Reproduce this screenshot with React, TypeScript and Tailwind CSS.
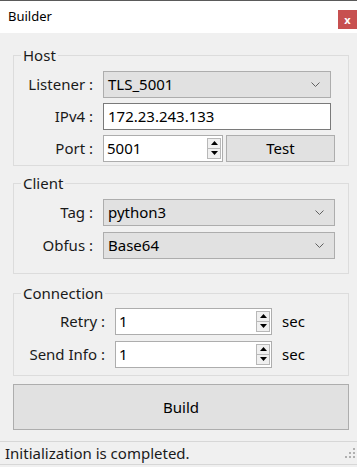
import React from 'react';

const font = { fontFamily: '"Noto Sans", "Open Sans", sans-serif' };

function Chevron() {
  return (
    <svg width="9" height="5" viewBox="0 0 9 5" className="shrink-0">
      <path d="M0.5 0.5 L4.5 4.5 L8.5 0.5" fill="none" stroke="#606060" strokeWidth="1" />
    </svg>
  );
}

function Combo({ value, width }: { value: string; width: string }) {
  return (
    <div
      className={`flex h-[27px] items-center justify-between border border-[#adadad] bg-[#e1e1e1] pl-[4px] pr-[10px] text-[15px] text-black ${width}`}
    >
      <span>{value}</span>
      <Chevron />
    </div>
  );
}

function SpinButtons() {
  return (
    <div className="flex h-full flex-col justify-center py-[2px] pr-[1px]">
      <div className="flex h-[11px] w-[14px] items-center justify-center border border-[#b8b8b8] bg-[#f0f0f0]">
        <svg width="7" height="4" viewBox="0 0 7 4">
          <path d="M3.5 0 L7 4 L0 4 Z" fill="#000" />
        </svg>
      </div>
      <div className="flex h-[11px] w-[14px] items-center justify-center border border-t-0 border-[#b8b8b8] bg-[#f0f0f0]">
        <svg width="7" height="4" viewBox="0 0 7 4">
          <path d="M0 0 L7 0 L3.5 4 Z" fill="#000" />
        </svg>
      </div>
    </div>
  );
}

function Spin({ value, width }: { value: string; width: string }) {
  return (
    <div className={`flex h-[27px] items-center justify-between border border-[#adadad] bg-white pl-[3px] text-[15px] ${width}`}>
      <span>{value}</span>
      <SpinButtons />
    </div>
  );
}

function Row({ label, labelWidth, children }: { label: string; labelWidth: string; children: React.ReactNode }) {
  return (
    <div className="flex h-[27px] items-center">
      <div className={`text-right text-[15px] text-[#1a1a1a] ${labelWidth}`}>{label}</div>
      <div className="ml-[10px] flex items-center">{children}</div>
    </div>
  );
}

function Group({ title, className, children }: { title: string; className: string; children: React.ReactNode }) {
  return (
    <fieldset className={`ml-[13px] w-[336px] border border-[#dcdcdc] ${className}`}>
      <legend className="ml-[7px] px-[2px] text-[15px] leading-[18px] text-[#1a1a1a]">{title}</legend>
      {children}
    </fieldset>
  );
}

export default function App() {
  return (
    <div className="flex h-[467px] w-[357px] flex-col overflow-hidden bg-[#f0f0f0]" style={font}>
      <div className="flex h-[33px] shrink-0 items-start justify-between border-t border-[#5a5a5a] bg-white">
        <span className="pl-[8px] pt-[6px] text-[13px] text-black">Builder</span>
        <div className="mt-[9px] flex h-[19px] w-[19px] items-center justify-center bg-[#c75050] text-[11px] font-bold leading-none text-white">
          x
        </div>
      </div>

      <Group title="Host" className="mt-[13px] pb-[3px]">
        <div className="flex flex-col gap-[5px] pt-[7px]">
          <Row label="Listener :" labelWidth="w-[79px]">
            <Combo value="TLS_5001" width="w-[228px]" />
          </Row>
          <Row label="IPv4 :" labelWidth="w-[79px]">
            <div className="flex h-[27px] w-[228px] items-center border border-[#7a7a7a] bg-white pl-[4px] text-[15px]">
              172.23.243.133
            </div>
          </Row>
          <Row label="Port :" labelWidth="w-[79px]">
            <Spin value="5001" width="w-[120px]" />
            <div className="ml-[3px] flex h-[27px] w-[109px] items-center justify-center border border-[#adadad] bg-[#e1e1e1] text-[15px]">
              Test
            </div>
          </Row>
        </div>
      </Group>

      <Group title="Client" className="mt-[8px] pb-[14px]">
        <div className="flex flex-col gap-[6px] pt-[7px]">
          <Row label="Tag :" labelWidth="w-[79px]">
            <Combo value="python3" width="w-[232px]" />
          </Row>
          <Row label="Obfus :" labelWidth="w-[79px]">
            <Combo value="Base64" width="w-[232px]" />
          </Row>
        </div>
      </Group>

      <Group title="Connection" className="mt-[10px] pb-[7px]">
        <div className="flex flex-col gap-[6px] pt-[6px]">
          <Row label="Retry :" labelWidth="w-[91px]">
            <Spin value="1" width="w-[157px]" />
            <span className="ml-[10px] text-[15px]">sec</span>
          </Row>
          <Row label="Send Info :" labelWidth="w-[91px]">
            <Spin value="1" width="w-[157px]" />
            <span className="ml-[10px] text-[15px]">sec</span>
          </Row>
        </div>
      </Group>

      <div className="ml-[13px] mt-[8px] flex h-[46px] w-[336px] items-center justify-center border border-[#adadad] bg-[#e1e1e1] text-[15px]">
        Build
      </div>

      <div className="mt-[11px] flex h-[24px] items-center justify-between border-y border-[#d7d7d7] pl-[5px] pr-[2px]">
        <span className="text-[15px] text-[#1a1a1a]">Initialization is completed.</span>
        <svg width="10" height="10" viewBox="0 0 10 10">
          <rect x="8" y="0" width="2" height="2" fill="#b0b0b0" />
          <rect x="4" y="4" width="2" height="2" fill="#b0b0b0" />
          <rect x="8" y="4" width="2" height="2" fill="#b0b0b0" />
          <rect x="0" y="8" width="2" height="2" fill="#b0b0b0" />
          <rect x="4" y="8" width="2" height="2" fill="#b0b0b0" />
          <rect x="8" y="8" width="2" height="2" fill="#b0b0b0" />
        </svg>
      </div>
    </div>
  );
}
